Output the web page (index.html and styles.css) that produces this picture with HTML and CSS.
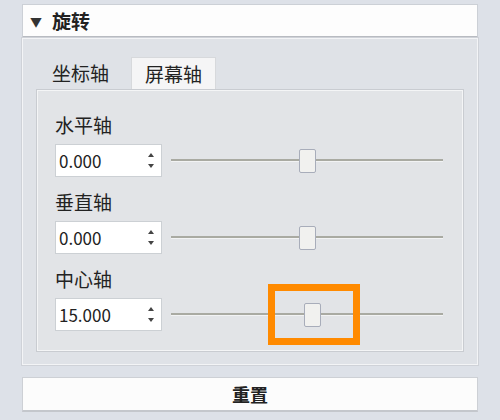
FILE: index.html
```html
<!DOCTYPE html>
<html lang="zh-CN">
<head>
    <meta charset="UTF-8">
    <title>旋转</title>
    <link rel="stylesheet" href="styles.css">
</head>
<body>
    <div class="panel">
        <div class="header">
            <span class="arrow">&#9660;</span>
            <span class="title">旋转</span>
        </div>

        <div class="section">
            <div class="tabs">
                <div class="tab">坐标轴</div>
                <div class="tab active">屏幕轴</div>
            </div>

            <div class="pane">
                <div class="row">
                    <div class="label">水平轴</div>
                    <div class="controls">
                        <div class="spin">
                            <span class="value">0.000</span>
                            <span class="arrows"><i class="up"></i><i class="down"></i></span>
                        </div>
                        <div class="slider">
                            <div class="track"></div>
                            <div class="handle" style="left: 128px"></div>
                        </div>
                    </div>
                </div>

                <div class="row">
                    <div class="label">垂直轴</div>
                    <div class="controls">
                        <div class="spin">
                            <span class="value">0.000</span>
                            <span class="arrows"><i class="up"></i><i class="down"></i></span>
                        </div>
                        <div class="slider">
                            <div class="track"></div>
                            <div class="handle" style="left: 128px"></div>
                        </div>
                    </div>
                </div>

                <div class="row">
                    <div class="label">中心轴</div>
                    <div class="controls">
                        <div class="spin">
                            <span class="value">15.000</span>
                            <span class="arrows"><i class="up"></i><i class="down"></i></span>
                        </div>
                        <div class="slider">
                            <div class="track"></div>
                            <div class="handle" style="left: 133px"></div>
                            <!-- highlight around the handle -->
                            <div class="focus-box"></div>
                        </div>
                    </div>
                </div>
            </div>
        </div>

        <button class="reset">重置</button>
    </div>
</body>
</html>
```

FILE: styles.css
```css
body {
    margin: 0;
    width: 500px;
    height: 420px;
    background-color: #dde1e8;
    font-family: "Noto Sans CJK SC", "Noto Sans", sans-serif;
    color: #222;
    overflow: hidden;
}
.panel {
    margin: 4px 22px 0 22px;
}
.header {
    height: 31px;
    background-color: #fdfdfd;
    border: 1px solid #ccd0d6;
    border-bottom: 2px solid #b8bbc1;
    display: flex;
    align-items: center;
    padding-left: 7px;
}
.arrow {
    font-size: 12px;
    color: #333;
    margin-right: 10px;
    margin-top: 1px;
}
.title {
    font-size: 19px;
    font-weight: bold;
    line-height: 1;
}
.section {
    background-color: #dfe2e7;
    border: 1px solid #f3f4f6;
    outline: 1px solid #cfd2d8;
    padding: 18px 13px 12px 13px;
}
.tabs {
    display: flex;
    padding-left: 3px;
}
.tab {
    height: 32px;
    line-height: 32px;
    font-size: 19px;
    padding: 0 13px;
}
.tab.active {
    background-color: #f5f5f6;
    border: 1px solid #d7d9dc;
    border-bottom: none;
    height: 31px;
    margin-left: 9px;
}
.pane {
    background-color: #e2e4e7;
    border: 1px solid #c9ccd1;
    box-shadow: inset 0 0 0 1px #f4f5f6;
    padding: 24px 20px 20px 18px;
}
.row + .row {
    margin-top: 14px;
}
.label {
    font-size: 19px;
    line-height: 22px;
    margin-bottom: 8px;
}
.controls {
    display: flex;
    gap: 9px;
    align-items: center;
}
.spin {
    width: 107px;
    height: 33px;
    box-sizing: border-box;
    background-color: #fff;
    border: 1px solid #ccd0d4;
    display: flex;
    align-items: center;
    justify-content: space-between;
    padding: 0 7px 0 3px;
}
.value {
    font-size: 17px;
    color: #222;
}
.arrows {
    display: flex;
    flex-direction: column;
    gap: 7px;
}
.arrows i {
    display: block;
    width: 0;
    height: 0;
    border-left: 3.5px solid transparent;
    border-right: 3.5px solid transparent;
}
.arrows .up {
    border-bottom: 4px solid #444;
}
.arrows .down {
    border-top: 4px solid #444;
}
.slider {
    flex: 1;
    height: 33px;
    position: relative;
}
.track {
    position: absolute;
    left: 0;
    right: 0;
    top: 15px;
    height: 2px;
    background-color: #a9aaa2;
    border-bottom: 1px solid #f2f3f4;
}
.handle {
    position: absolute;
    top: 5px;
    width: 15px;
    height: 22px;
    background-color: #f1f1ef;
    border: 1px solid #a8adba;
    border-radius: 2px;
}
.focus-box {
    position: absolute;
    left: 97px;
    top: -14px;
    width: 78px;
    height: 47px;
    border: 7px solid #ff8a00;
}
.reset {
    display: block;
    width: 100%;
    height: 35px;
    margin-top: 12px;
    background-color: #fcfcfc;
    border: 1px solid #cdd0d5;
    border-bottom: 2px solid #c4c7cc;
    font-family: "Noto Sans CJK SC", "Noto Sans", sans-serif;
    font-size: 18px;
    font-weight: bold;
    color: #222;
}
```
